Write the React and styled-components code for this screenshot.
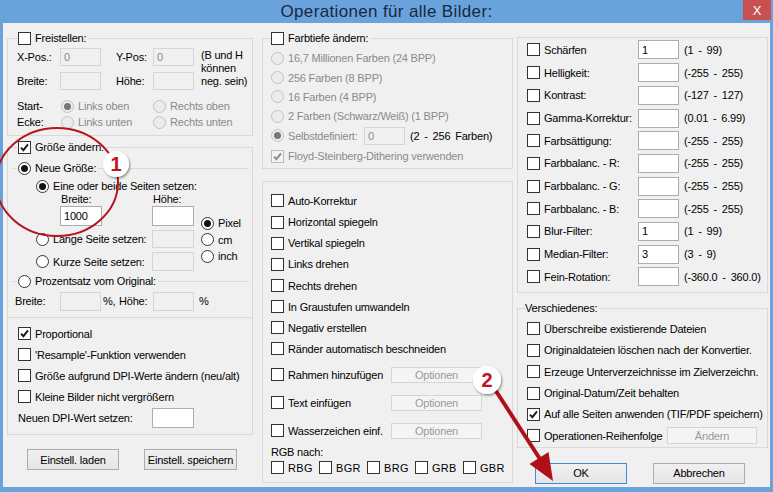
import React from 'react';
import styled, { createGlobalStyle, css } from 'styled-components';

const GlobalStyle = createGlobalStyle`
  html, body { margin: 0; padding: 0; background: #6aa3dc; }
  body { font-family: 'Liberation Sans', Arial, sans-serif; font-size: 11px; }
  * { box-sizing: border-box; }
`;

const Window = styled.div`
  position: relative;
  width: 773px;
  height: 492px;
  background: #6aa3dc;
  display: flex;
  flex-direction: column;
  padding: 0 3px 5px;
  overflow: hidden;
`;

const TitleBar = styled.div`
  height: 23px;
  flex: none;
  display: grid;
  grid-template-columns: 1fr auto 1fr;
  align-items: center;
  margin: 0 -3px;
`;

const Title = styled.div`
  grid-column: 2;
  font-size: 17px;
  letter-spacing: 0.35px;
  color: #18293f;
  line-height: 23px;
`;

const CloseButton = styled.div`
  grid-column: 3;
  justify-self: end;
  align-self: start;
  width: 28px;
  height: 20px;
  margin-right: 2px;
  background: #c75050;
  color: #fff;
  font-size: 13px;
  display: flex;
  align-items: center;
  justify-content: center;
`;

const Client = styled.div`
  flex: 1;
  background: #f0f0f0;
  display: flex;
  align-items: flex-start;
  padding-left: 4px;
  color: #000;
  letter-spacing: -0.2px;
`;

const Column = styled.div`
  width: ${p => p.$w}px;
  margin-left: ${p => p.$ml || 0}px;
  padding-top: ${p => p.$pt || 0}px;
  display: flex;
  flex-direction: column;
`;

const Group = styled.fieldset`
  margin: ${p => p.$mt || 0}px 0 0;
  padding: ${p => p.$pad || '0'};
  border: 1px solid #d9d9d9;
  min-width: 0;
  ${p => p.$topOnly && css`
    border-width: 1px 0 0;
  `}
`;

const Legend = styled.legend`
  display: flex;
  align-items: center;
  height: 14px;
  padding: 0 2px 0 ${p => p.$pl ?? 1}px;
  margin-left: ${p => p.$ml || 0}px;
`;

const Row = styled.div`
  display: flex;
  align-items: center;
  height: ${p => p.$h}px;
  margin-top: ${p => p.$mt || 0}px;
  flex: none;
`;

const Item = styled.div`
  display: flex;
  align-items: center;
  gap: 4px;
  white-space: nowrap;
  color: ${p => (p.$disabled ? '#8a8a8a' : '#000')};
  ${p => p.$w && css`
    width: ${p.$w}px;
    flex: none;
  `}
`;

const Box = styled.span`
  width: 13px;
  height: 13px;
  flex: none;
  border: 1px solid ${p => (p.$disabled ? '#bcbcbc' : '#333')};
  background: ${p => (p.$disabled ? '#f4f4f4' : '#fff')};
  display: inline-flex;
  align-items: center;
  justify-content: center;
`;

const RadioDot = styled.span`
  width: 13px;
  height: 13px;
  flex: none;
  border-radius: 50%;
  border: 1px solid ${p => (p.$disabled ? '#c2c2c2' : '#333')};
  background: ${p => (p.$disabled ? '#ececec' : '#fff')};
  display: inline-flex;
  align-items: center;
  justify-content: center;
  &::after {
    content: '';
    width: 7px;
    height: 7px;
    border-radius: 50%;
    background: ${p => (p.$disabled ? '#777' : '#111')};
    display: ${p => (p.$on ? 'block' : 'none')};
  }
`;

const Label = styled.span`
  white-space: nowrap;
  ${p => p.$pl && css`padding-left: ${p.$pl}px;`}
  ${p => p.$w && css`
    width: ${p.$w}px;
    flex: none;
  `}
`;

const Field = styled.input`
  width: ${p => p.$w || 41}px;
  height: ${p => p.$h || 18}px;
  margin: 0;
  margin-left: ${p => p.$ml || 0}px;
  padding: 0 3px;
  border: 1px solid ${p => (p.disabled ? '#d5d5d5' : '#abadb3')};
  background: ${p => (p.disabled ? '#f0f0f0' : '#fff')};
  color: ${p => (p.disabled ? '#8a8a8a' : '#000')};
  font: inherit;
  letter-spacing: inherit;
  outline: none;
  flex: none;
  align-self: center;
`;

const Range = styled.span`
  margin-left: 5px;
  white-space: nowrap;
  word-spacing: 2px;
`;

const PushButton = styled.button`
  width: ${p => p.$w}px;
  height: ${p => p.$h}px;
  margin: 0;
  padding: 0;
  flex: none;
  font: inherit;
  letter-spacing: inherit;
  border-radius: 0;
  color: ${p => (p.disabled ? '#9a9a9a' : '#000')};
  border: 1px solid ${p => (p.$primary ? '#3d8bd9' : p.disabled ? '#d5d5d5' : '#acacac')};
  background: ${p => (p.disabled ? '#f4f4f4' : 'linear-gradient(#f0f0f0, #e5e5e5)')};
`;

const ButtonRow = styled.div`
  display: flex;
  gap: ${p => p.$gap}px;
  padding-left: ${p => p.$pl}px;
  margin-top: ${p => p.$mt}px;
`;

const CropGrid = styled.div`
  display: grid;
  grid-template-columns: 43px 56px 37px 48px 1fr;
  grid-template-rows: 24px 23px;
  align-items: center;
`;

const Note = styled.div`
  grid-row: 1 / 3;
  grid-column: 5;
  line-height: 13px;
`;

const CornerGrid = styled.div`
  display: grid;
  grid-template-columns: 44px 92px 1fr;
  grid-template-rows: 16px 16px;
  align-items: center;
  margin-top: 6px;
`;

const CornerLabel = styled.div`
  grid-row: 1 / 3;
  grid-column: 1;
  line-height: 16px;
`;

const SizeGrid = styled.div`
  display: grid;
  grid-template-columns: 24px 116px 49px 1fr;
  grid-template-rows: 14px 12px 22px 24px 21px;
  align-items: center;
`;

const Cell = styled.div`
  grid-column: ${p => p.$col};
  grid-row: ${p => p.$row};
  display: flex;
  align-items: center;
  align-self: stretch;
`;

const Units = styled.div`
  grid-column: 4;
  grid-row: 3 / 6;
  align-self: start;
  padding-top: 10px;
  display: flex;
  flex-direction: column;
`;

const UnitRow = styled.div`
  height: 16.5px;
  display: flex;
  align-items: center;
`;

const PercentGrid = styled.div`
  display: grid;
  grid-template-columns: 3px 45px 43px 16px 34px 46px 1fr;
  height: 22px;
  align-items: center;
`;

const RgbItem = styled(Item)`
  width: 48px;
  flex: none;
  letter-spacing: 0.3px;
`;

const Overlay = styled.svg`
  position: absolute;
  left: 0;
  top: 0;
  width: 773px;
  height: 492px;
  pointer-events: none;
`;

const Tick = ({ disabled }) => (
  <svg width="9" height="9" viewBox="0 0 9 9">
    <path d="M1 4.6 L3.4 7.2 L8 1.4" fill="none" stroke={disabled ? '#8d8d8d' : '#1a1a1a'} strokeWidth="1.9" />
  </svg>
);

const Check = ({ on, disabled, w, children }) => (
  <Item $disabled={disabled} $w={w}>
    <Box $disabled={disabled}>{on && <Tick disabled={disabled} />}</Box>
    {children}
  </Item>
);

const Option = ({ on, disabled, w, children }) => (
  <Item $disabled={disabled} $w={w}>
    <RadioDot $on={on} $disabled={disabled} />
    {children}
  </Item>
);

const adjustments = [
  ['Schärfen', '1', '(1  -  99)'],
  ['Helligkeit:', '', '(-255  -  255)'],
  ['Kontrast:', '', '(-127  -  127)'],
  ['Gamma-Korrektur:', '', '(0.01  -  6.99)'],
  ['Farbsättigung:', '', '(-255  -  255)'],
  ['Farbbalanc. - R:', '', '(-255  -  255)'],
  ['Farbbalanc. - G:', '', '(-255  -  255)'],
  ['Farbbalanc. - B:', '', '(-255  -  255)'],
  ['Blur-Filter:', '1', '(1  -  99)'],
  ['Median-Filter:', '3', '(3  -  9)'],
  ['Fein-Rotation:', '', '(-360.0  -  360.0)'],
];

const transforms = [
  'Auto-Korrektur',
  'Horizontal spiegeln',
  'Vertikal spiegeln',
  'Links drehen',
  'Rechts drehen',
  'In Graustufen umwandeln',
  'Negativ erstellen',
  'Ränder automatisch beschneiden',
];

const misc = [
  ['Überschreibe existierende Dateien', false],
  ['Originaldateien löschen nach der Konvertier.', false],
  ['Erzeuge Unterverzeichnisse im Zielverzeichn.', false],
  ['Original-Datum/Zeit behalten', false],
  ['Auf alle Seiten anwenden (TIF/PDF speichern)', true],
];

const LeftColumn = () => (
  <Column $w={246} $pt={8}>
    <Group $pad="0 0 5px 9px">
      <Legend><Check>Freistellen:</Check></Legend>
      <CropGrid>
        <Note>(B und H<br />können<br />neg. sein)</Note>
        <Label>X-Pos.:</Label>
        <Field disabled defaultValue="0" />
        <Label>Y-Pos:</Label>
        <Field disabled defaultValue="0" />
        <Label>Breite:</Label>
        <Field disabled />
        <Label>Höhe:</Label>
        <Field disabled />
      </CropGrid>
      <CornerGrid>
        <CornerLabel>Start-<br />Ecke:</CornerLabel>
        <Option on disabled>Links oben</Option>
        <Option disabled>Rechts oben</Option>
        <Option disabled>Links unten</Option>
        <Option disabled>Rechts unten</Option>
      </CornerGrid>
    </Group>

    <Group $mt={4} $pad="0 3px 0 4px">
      <Legend $ml={5}><Check on>Größe ändern:</Check></Legend>
      <Group $topOnly $mt={7} $pad="4px 0 1px 0">
        <Legend $ml={5}><Option on>Neue Größe:</Option></Legend>
        <SizeGrid>
          <Cell $col="2 / 5" $row={1}><Option on>Eine oder beide Seiten setzen:</Option></Cell>
          <Cell $col={2} $row={2}><Label $pl={25}>Breite:</Label></Cell>
          <Cell $col={3} $row={2}><Label $pl={1}>Höhe:</Label></Cell>
          <Cell $col={2} $row={3}><Field $ml={24} $w={42} $h={20} readOnly defaultValue="1000" /></Cell>
          <Cell $col={3} $row={3}><Field $w={42} $h={20} readOnly /></Cell>
          <Cell $col={2} $row={4}><Option>Lange Seite setzen:</Option></Cell>
          <Cell $col={3} $row={4}><Field $w={42} disabled /></Cell>
          <Cell $col={2} $row={5}><Option>Kurze Seite setzen:</Option></Cell>
          <Cell $col={3} $row={5}><Field $w={42} $h={19} disabled /></Cell>
          <Units>
            <UnitRow><Option on>Pixel</Option></UnitRow>
            <UnitRow><Option>cm</Option></UnitRow>
            <UnitRow><Option>inch</Option></UnitRow>
          </Units>
        </SizeGrid>
      </Group>
      <Group $topOnly $mt={1} $pad="2px 0 5px 0">
        <Legend $ml={5}><Option>Prozentsatz vom Original:</Option></Legend>
        <PercentGrid>
          <span />
          <Label>Breite:</Label>
          <Field disabled $h={19} />
          <Label>%,</Label>
          <Label>Höhe:</Label>
          <Field disabled $h={19} />
          <Label>%</Label>
        </PercentGrid>
      </Group>
    </Group>

    <Group $mt={-1} $pad="5px 0 5px 10px">
      <Row $h={21}><Check on>Proportional</Check></Row>
      <Row $h={21}><Check>'Resample'-Funktion verwenden</Check></Row>
      <Row $h={21}><Check>Größe aufgrund DPI-Werte ändern (neu/alt)</Check></Row>
      <Row $h={21}><Check>Kleine Bilder nicht vergrößern</Check></Row>
      <Row $h={22}>
        <Label $w={134}>Neuen DPI-Wert setzen:</Label>
        <Field $w={42} $h={20} readOnly />
      </Row>
    </Group>

    <ButtonRow $pl={20} $gap={25} $mt={14}>
      <PushButton $w={92} $h={21}>Einstell. laden</PushButton>
      <PushButton $w={93} $h={21}>Einstell. speichern</PushButton>
    </ButtonRow>
  </Column>
);

const MiddleColumn = () => (
  <Column $w={251} $ml={9} $pt={8}>
    <Group $pad="3px 0 1px 8px">
      <Legend $pl={0}><Check>Farbtiefe ändern:</Check></Legend>
      <Row $h={20}><Option disabled>16,7 Millionen Farben (24 BPP)</Option></Row>
      <Row $h={19}><Option disabled>256 Farben (8 BPP)</Option></Row>
      <Row $h={19}><Option disabled>16 Farben (4 BPP)</Option></Row>
      <Row $h={20}><Option disabled>2 Farben (Schwarz/Weiß) (1 BPP)</Option></Row>
      <Row $h={19}>
        <Option on disabled w={93}>Selbstdefiniert:</Option>
        <Field disabled defaultValue="0" />
        <Range>(2 - 256 Farben)</Range>
      </Row>
      <Row $h={22}><Check on disabled>Floyd-Steinberg-Dithering verwenden</Check></Row>
    </Group>

    <Group $mt={12} $pad="8.4px 0 5px 8px">
      {transforms.map(t => (
        <Row key={t} $h={21.15}><Check>{t}</Check></Row>
      ))}
      <Row $h={28} $mt={1.4}>
        <Check w={120}>Rahmen hinzufügen</Check>
        <PushButton disabled $w={91} $h={16}>Optionen</PushButton>
      </Row>
      <Row $h={28}>
        <Check w={120}>Text einfügen</Check>
        <PushButton disabled $w={91} $h={16}>Optionen</PushButton>
      </Row>
      <Row $h={28}>
        <Check w={120}>Wasserzeichen einf.</Check>
        <PushButton disabled $w={91} $h={16}>Optionen</PushButton>
      </Row>
      <Row $h={14}>RGB nach:</Row>
      <Row $h={18}>
        {['RBG', 'BGR', 'BRG', 'GRB', 'GBR'].map(c => (
          <RgbItem key={c}><Box />{c}</RgbItem>
        ))}
      </Row>
    </Group>
  </Column>
);

const RightColumn = () => (
  <Column $w={251} $ml={4} $pt={14}>
    <Group $pad="0.65px 0 4px 9px">
      {adjustments.map(([name, value, range]) => (
        <Row key={name} $h={22.7}>
          <Check w={111}>{name}</Check>
          <Field readOnly defaultValue={value} $h={19} />
          <Range>{range}</Range>
        </Row>
      ))}
    </Group>

    <Group $mt={8} $pad="3px 0 0 9px">
      <Legend $ml={-2} $pl={0}>Verschiedenes:</Legend>
      {misc.map(([text, on]) => (
        <Row key={text} $h={21.4}><Check on={on}>{text}</Check></Row>
      ))}
      <Row $h={21.4}>
        <Check w={140}>Operationen-Reihenfolge</Check>
        <PushButton disabled $w={90} $h={17}>Ändern</PushButton>
      </Row>
    </Group>

    <ButtonRow $pl={18} $gap={26} $mt={15}>
      <PushButton $primary $w={92} $h={21}>OK</PushButton>
      <PushButton $w={92} $h={21}>Abbrechen</PushButton>
    </ButtonRow>
  </Column>
);

const Annotations = () => (
  <Overlay viewBox="0 0 773 492">
    <defs>
      <filter id="badge-shadow" x="-50%" y="-50%" width="200%" height="200%">
        <feDropShadow dx="1" dy="1.5" stdDeviation="1.3" floodColor="#000" floodOpacity="0.45" />
      </filter>
    </defs>
    <ellipse cx="57" cy="182" rx="61" ry="54" fill="none" stroke="#b3161f" strokeWidth="2" />
    <line x1="494" y1="388" x2="540" y2="459" stroke="#b0101a" strokeWidth="4" />
    <polygon points="553,481 529.5,464 548.5,452" fill="#b0101a" />
    <circle cx="116" cy="164" r="13" fill="#fff" filter="url(#badge-shadow)" />
    <text x="116" y="171" textAnchor="middle" fontFamily="Liberation Sans, Arial, sans-serif" fontSize="20" fontWeight="bold" fill="#c0151f">1</text>
    <circle cx="487" cy="380" r="14" fill="#fff" filter="url(#badge-shadow)" />
    <text x="487" y="387" textAnchor="middle" fontFamily="Liberation Sans, Arial, sans-serif" fontSize="20" fontWeight="bold" fill="#c0151f">2</text>
  </Overlay>
);

const App = () => (
  <>
    <GlobalStyle />
    <Window>
      <TitleBar>
        <Title>Operationen für alle Bilder:</Title>
        <CloseButton>X</CloseButton>
      </TitleBar>
      <Client>
        <LeftColumn />
        <MiddleColumn />
        <RightColumn />
      </Client>
      <Annotations />
    </Window>
  </>
);

export default App;
